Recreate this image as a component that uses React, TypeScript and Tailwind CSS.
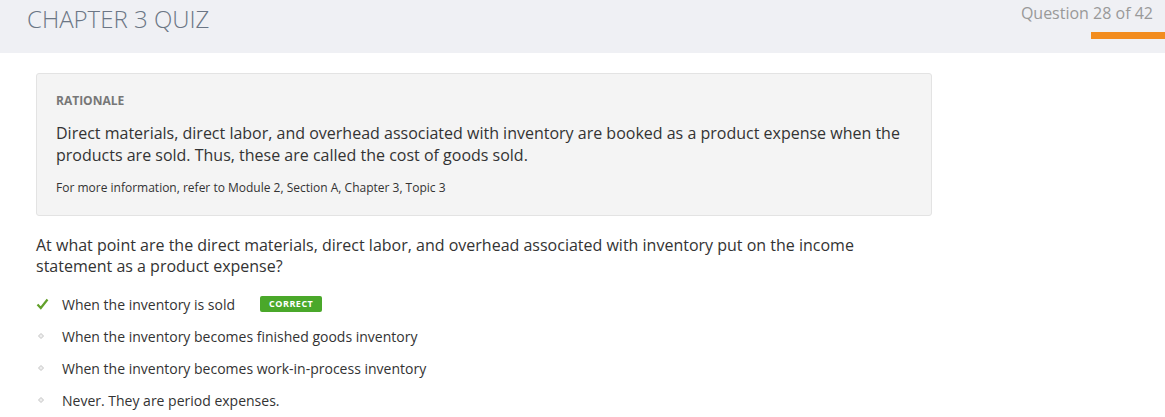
import React from "react";

const options = [
  "When the inventory becomes finished goods inventory",
  "When the inventory becomes work-in-process inventory",
  "Never. They are period expenses.",
];

export default function App() {
  return (
    <div className="w-[1165px] h-[417px] bg-white overflow-hidden text-[#333]" style={{ fontFamily: '"Open Sans", sans-serif' }}>
      <div className="h-[53px] bg-[#eff0f4] flex justify-between">
        <div className="pl-[27px] pt-[1px] text-[24px] font-light text-[#6b7685]">CHAPTER 3 QUIZ</div>
        <div className="flex flex-col items-end">
          <div className="pr-[12px] pt-[1px] text-[16px] text-[#999]">Question 28 of 42</div>
          <div className="mt-[7px] w-[74px] h-[7px] bg-[#f28c1e]" />
        </div>
      </div>
      <div className="px-[36px] pt-[20px]">
        <div className="w-[896px] bg-[#f4f4f4] border border-[#e3e3e3] rounded-[3px] px-[19px] pt-[18px] pb-[19px]">
          <div className="text-[12px] font-bold text-[#777] leading-[18px]">RATIONALE</div>
          <div className="mt-[12px] text-[16px] leading-[22px] text-[#333]">
            Direct materials, direct labor, and overhead associated with inventory are booked as a product expense when the products are sold. Thus, these are called the cost of goods sold.
          </div>
          <div className="mt-[13px] text-[12px] leading-[17px] text-[#333]">
            For more information, refer to Module 2, Section A, Chapter 3, Topic 3
          </div>
        </div>
        <div className="mt-[19px] w-[860px] text-[16px] leading-[21px] text-[#333]">
          At what point are the direct materials, direct labor, and overhead associated with inventory put on the income statement as a product expense?
        </div>
        <div className="mt-[11px] flex flex-col">
          <div className="h-[32px] flex items-center">
            <div className="w-[26px] flex items-center">
              <svg width="13" height="12" viewBox="0 0 13 12">
                <path d="M1.5 6.5 L4.8 10 L11.5 1.5" fill="none" stroke="#62a02a" strokeWidth="2.2" />
              </svg>
            </div>
            <span className="text-[14px]">When the inventory is sold</span>
            <span className="ml-[25px] px-[9px] h-[16px] leading-[16px] rounded-[2px] bg-[#4aa82a] text-white text-[9px] font-bold tracking-[0.5px]">CORRECT</span>
          </div>
          {options.map((o) => (
            <div key={o} className="h-[32px] flex items-center">
              <div className="w-[26px] flex items-center pl-[2px]">
                <svg width="6" height="6" viewBox="0 0 6 6">
                  <path d="M3 0.5 L5.5 3 L3 5.5 L0.5 3 Z" fill="#eee" stroke="#c4c4c4" strokeWidth="1" />
                </svg>
              </div>
              <span className="text-[14px]">{o}</span>
            </div>
          ))}
        </div>
      </div>
    </div>
  );
}
